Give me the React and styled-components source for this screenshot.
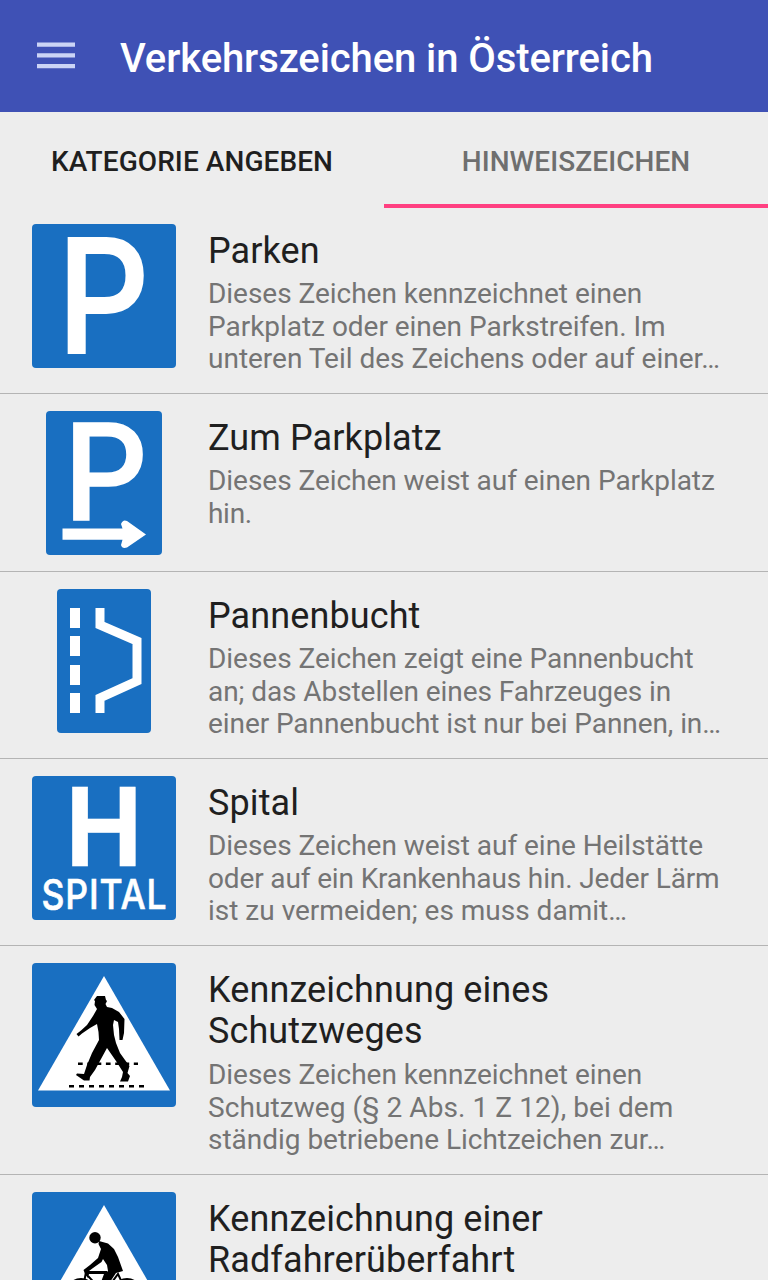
import React from "react";
import styled, { createGlobalStyle } from "styled-components";

const GlobalStyle = createGlobalStyle`
  * { box-sizing: border-box; }
  body {
    margin: 0;
    background: #ededed;
    font-family: Roboto, "Liberation Sans", sans-serif;
    overflow: hidden;
  }
`;

const Screen = styled.div`
  height: 1280px;
  overflow: hidden;
  background: #ededed;
`;

const AppBar = styled.header`
  height: 112px;
  display: flex;
  align-items: center;
  padding-left: 37px;
  gap: 45px;
  background: #3f51b5;
`;

const MenuButton = styled.button`
  width: 38px;
  height: 26px;
  padding: 0;
  border: 0;
  background: none;
  svg { display: block; overflow: visible; }
`;

const Title = styled.h1`
  margin: 0;
  padding-top: 5px;
  font-size: 40px;
  line-height: 48px;
  font-weight: 500;
  letter-spacing: -0.09px;
  color: #fff;
  white-space: nowrap;
`;

const Tabs = styled.nav`
  display: grid;
  grid-template-columns: 1fr 1fr;
  height: 96px;
`;

const Tab = styled.div`
  display: flex;
  align-items: center;
  justify-content: center;
  padding-top: 7px;
  border-bottom: 4px solid ${(p) => (p.$marked ? "#ff4081" : "transparent")};
  color: ${(p) => (p.$marked ? "#6f6f6f" : "#1f1f1f")};
  font-size: 28px;
  font-weight: 500;
  letter-spacing: 0.08px;
  text-transform: uppercase;
`;

const List = styled.ul`
  margin: 0;
  padding: 0;
  list-style: none;
`;

const Row = styled.li`
  display: flex;
  gap: 32px;
  height: ${(p) => p.$height}px;
  padding: 16px 32px 0;
  border-bottom: 1px solid #b4b4b4;
  margin-bottom: 1px;
`;

const Thumb = styled.div`
  flex: 0 0 144px;
  display: flex;
  justify-content: center;
  height: 144px;
  svg { display: block; }
`;

const Texts = styled.div`
  width: 528px;
  padding-top: 7px;
`;

const Name = styled.h2`
  margin: 0;
  font-size: 36px;
  line-height: 41px;
  font-weight: 400;
  letter-spacing: 0.1px;
  color: #1f1f1f;
  white-space: pre-line;
`;

const Description = styled.p`
  margin: ${(p) => p.$gap}px 0 0;
  font-size: 28px;
  line-height: 32.6px;
  color: #747474;
`;

const Line = styled.span`
  display: block;
  letter-spacing: ${(p) => p.$tracking}px;
  white-space: nowrap;
`;

const BLUE = "#196fc1";

function Plate({ width = 144, children }) {
  return (
    <svg width={width} height="144" viewBox={`0 0 ${width} 144`} fontFamily="Inter, Roboto, sans-serif" fill="#fff">
      <rect width={width} height="144" rx="4" fill={BLUE} />
      {children}
    </svg>
  );
}

const ParkingSign = () => (
  <Plate>
    <text transform="translate(25 128.5) scale(0.915 1)" fontSize="158" fontWeight="500" stroke="#fff" strokeWidth="2">P</text>
  </Plate>
);

const ToParkingSign = () => (
  <Plate width={116}>
    <text transform="translate(17.3 108.7) scale(0.995 1)" fontSize="133.5" fontWeight="500" stroke="#fff" strokeWidth="1.6">P</text>
    <path d="M16.5 117.5H76.5L75 113Q77 108 81 110L100 123.5L81 136.5Q76 138 75 134L76.5 128.7H16.5Z" />
  </Plate>
);

const BreakdownBaySign = () => (
  <Plate width={94}>
    <path d="M13 19h10v20h-10zM13 47h10v20h-10zM13 76h10v20h-10zM13 104h10v20h-10z" />
    <path d="M43 19V36L80 52V92L43 109V124" fill="none" stroke="#fff" strokeWidth="9" />
  </Plate>
);

const HospitalSign = () => (
  <Plate>
    <text transform="translate(33.8 89.5) scale(0.94 1)" fontSize="108.5" fontWeight="700" stroke="#fff" strokeWidth="0.5">H</text>
    <text x="9.5" y="132.5" fontSize="41.5" fontWeight="500" letterSpacing="1" stroke="#fff" strokeWidth="0.6" textLength="126" lengthAdjust="spacingAndGlyphs">SPITAL</text>
  </Plate>
);

const CrosswalkSign = () => (
  <Plate>
    <path d="M72 13L138 127.5H6Z" />
    <g stroke="#000" strokeWidth="2.6" fill="none">
      <path d="M46 100.7H106" strokeDasharray="4.7 4.6" />
      <path d="M37 123.2H112" strokeDasharray="5 5" />
    </g>
    <path
      fill="#000"
      d="M65 33L73 33L74 37L75 38L73.5 41L75 44L80 45L87 49L92.5 56L92 70L90.5 77L87.5 77L87 66L86 59L82 57L81 62L82 72L84 80L88 90L93 97L97.5 103L95.5 110L98 113L96 118.5L88 118.5L90 114L91 109L84 98L75 85L69 96L63 107L58 114L57.5 117.5L52 117.5L44 112L45 110.5L52 111L55 102L60 90L67 77L66.5 69L65 61L58 65L50 70.5L46.5 73.5L44.5 71L49 67.5L55 62L61 53L65 46L62.5 42L63 38L62 37Z"
    />
  </Plate>
);

const CyclistSign = () => (
  <Plate>
    <path d="M72 13L138 127.5H6Z" />
    <circle cx="63" cy="45.7" r="5.7" fill="#000" />
    <path
      fill="#000"
      d="M67 49L76 51.5L82 57L86 65L91 79L84 81L78 90H69L72 82L76 79L75 73L71 67L69.5 70L61 76L57 79H75V82H57L56 86L53.5 83L51.5 78L58 73L66 66L69 57L66.5 52Z"
    />
    <g fill="none" stroke="#000" strokeWidth="2">
      <circle cx="49" cy="101" r="14" />
      <circle cx="95" cy="101" r="14" />
      <path d="M54 80L50 101M56 84L72 101L86 82L95 101H72" />
    </g>
  </Plate>
);

const signs = [
  {
    Sign: ParkingSign,
    height: 186,
    name: "Parken",
    lines: [
      ["Dieses Zeichen kennzeichnet einen", -0.03],
      ["Parkplatz oder einen Parkstreifen. Im", -0.03],
      ["unteren Teil des Zeichens oder auf einer…", -0.01],
    ],
  },
  {
    Sign: ToParkingSign,
    height: 177,
    name: "Zum Parkplatz",
    lines: [
      ["Dieses Zeichen weist auf einen Parkplatz", -0.04],
      ["hin.", -0.3],
    ],
  },
  {
    Sign: BreakdownBaySign,
    height: 186,
    name: "Pannenbucht",
    lines: [
      ["Dieses Zeichen zeigt eine Pannenbucht", -0.03],
      ["an; das Abstellen eines Fahrzeuges in", -0.08],
      ["einer Pannenbucht ist nur bei Pannen, in…", -0.08],
    ],
  },
  {
    Sign: HospitalSign,
    height: 186,
    name: "Spital",
    lines: [
      ["Dieses Zeichen weist auf eine Heilstätte", -0.03],
      ["oder auf ein Krankenhaus hin. Jeder Lärm", -0.14],
      ["ist zu vermeiden; es muss damit…", 0],
    ],
  },
  {
    Sign: CrosswalkSign,
    height: 228,
    gap: 7,
    name: "Kennzeichnung eines\nSchutzweges",
    lines: [
      ["Dieses Zeichen kennzeichnet einen", -0.03],
      ["Schutzweg (§ 2 Abs. 1 Z 12), bei dem", 0.08],
      ["ständig betriebene Lichtzeichen zur…", -0.02],
    ],
  },
  {
    Sign: CyclistSign,
    height: 228,
    name: "Kennzeichnung einer\nRadfahrerüberfahrt",
    lines: [],
  },
];

export default function App() {
  return (
    <Screen>
      <GlobalStyle />
      <AppBar>
        <MenuButton aria-label="Menü">
          <svg width="38" height="26" viewBox="0 0 38 26" fill="#cbd4f6">
            <path d="M0 -.4h38v4.2H0zM0 10.3h38v4.2H0zM0 21h38v4.2H0z" />
          </svg>
        </MenuButton>
        <Title>Verkehrszeichen in Österreich</Title>
      </AppBar>
      <Tabs>
        <Tab>Kategorie angeben</Tab>
        <Tab $marked>Hinweiszeichen</Tab>
      </Tabs>
      <List>
        {signs.map(({ Sign, height, name, lines, gap = 6 }) => (
          <Row key={name} $height={height}>
            <Thumb>
              <Sign />
            </Thumb>
            <Texts>
              <Name>{name}</Name>
              <Description $gap={gap}>
                {lines.map(([text, tracking]) => (
                  <Line key={text} $tracking={tracking}>{text}</Line>
                ))}
              </Description>
            </Texts>
          </Row>
        ))}
      </List>
    </Screen>
  );
}
